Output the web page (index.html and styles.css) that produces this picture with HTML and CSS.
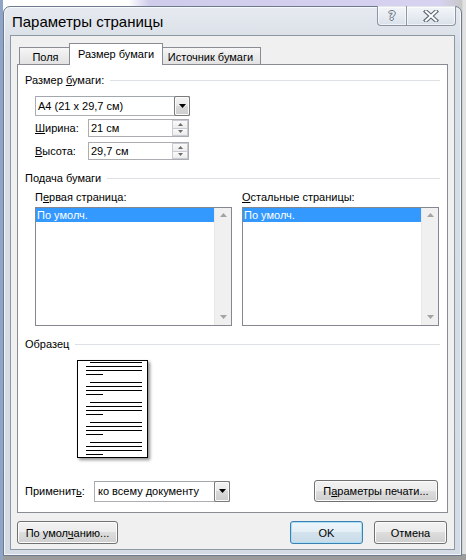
FILE: index.html
```html
<!DOCTYPE html>
<html lang="ru">
<head>
<meta charset="utf-8">
<title>Параметры страницы</title>
<link rel="stylesheet" href="styles.css">
</head>
<body>
<div class="window">
  <div class="titlebar">
    <span class="title">Параметры страницы</span>
    <div class="caption">
      <div class="cap help"><span class="q">?</span></div>
      <div class="cap close">
        <svg width="16" height="12" viewBox="0 0 16 12"><path d="M3 1.5 L13 10.5 M13 1.5 L3 10.5" stroke="#5d6877" stroke-width="4.2" stroke-linecap="square"/><path d="M3 1.5 L13 10.5 M13 1.5 L3 10.5" stroke="#ffffff" stroke-width="2" stroke-linecap="square"/></svg>
      </div>
    </div>
  </div>
  <div class="client">
    <div class="tabs">
      <div class="tab tab-fields">Поля</div>
      <div class="tab tab-size active">Размер бумаги</div>
      <div class="tab tab-source">Источник бумаги</div>
    </div>
    <div class="panel">
      <div class="group-head"><span>Размер <u>б</u>умаги:</span></div>
      <div class="combo combo-size">
        <div class="value">A4 (21 x 29,7 см)</div>
        <div class="drop"><svg width="7" height="4" viewBox="0 0 7 4"><polygon points="0,0 7,0 3.5,4" fill="#000"/></svg></div>
      </div>
      <div class="field-row first">
        <span class="field-label"><u>Ш</u>ирина:</span>
        <div class="spin">
          <div class="value">21 см</div>
          <div class="spin-btns">
            <div class="sb"><svg width="5" height="3" viewBox="0 0 5 3"><polygon points="2.5,0 5,3 0,3" fill="#6b6b6b"/></svg></div>
            <div class="sb"><svg width="5" height="3" viewBox="0 0 5 3"><polygon points="0,0 5,0 2.5,3" fill="#6b6b6b"/></svg></div>
          </div>
        </div>
      </div>
      <div class="field-row">
        <span class="field-label"><u>В</u>ысота:</span>
        <div class="spin">
          <div class="value">29,7 см</div>
          <div class="spin-btns">
            <div class="sb"><svg width="5" height="3" viewBox="0 0 5 3"><polygon points="2.5,0 5,3 0,3" fill="#6b6b6b"/></svg></div>
            <div class="sb"><svg width="5" height="3" viewBox="0 0 5 3"><polygon points="0,0 5,0 2.5,3" fill="#6b6b6b"/></svg></div>
          </div>
        </div>
      </div>

      <div class="group-head gap"><span>Подача бумаги</span></div>
      <div class="feed">
        <div class="feed-col">
          <div class="feed-label"><span>П<u>е</u>рвая страница:</span></div>
          <div class="listbox">
            <div class="items"><div class="item selected">По умолч.</div></div>
            <div class="vscroll">
              <svg width="7" height="4" viewBox="0 0 7 4"><polygon points="3.5,0 7,4 0,4" fill="#a3a3a3"/></svg>
              <svg width="7" height="4" viewBox="0 0 7 4"><polygon points="0,0 7,0 3.5,4" fill="#a3a3a3"/></svg>
            </div>
          </div>
        </div>
        <div class="feed-col">
          <div class="feed-label"><span><u>О</u>стальные страницы:</span></div>
          <div class="listbox">
            <div class="items"><div class="item selected">По умолч.</div></div>
            <div class="vscroll">
              <svg width="7" height="4" viewBox="0 0 7 4"><polygon points="3.5,0 7,4 0,4" fill="#a3a3a3"/></svg>
              <svg width="7" height="4" viewBox="0 0 7 4"><polygon points="0,0 7,0 3.5,4" fill="#a3a3a3"/></svg>
            </div>
          </div>
        </div>
      </div>

      <div class="group-head gap"><span>Образец</span></div>
      <div class="sample">
        <div class="para"><i class="l ind"></i><i class="l"></i><i class="l"></i><i class="l short"></i></div>
        <div class="para"><i class="l ind"></i><i class="l"></i><i class="l"></i><i class="l short"></i></div>
        <div class="para"><i class="l ind"></i><i class="l"></i><i class="l"></i><i class="l short"></i></div>
        <div class="para"><i class="l ind"></i><i class="l"></i><i class="l"></i><i class="l short"></i></div>
        <div class="para"><i class="l ind"></i><i class="l"></i><i class="l"></i><i class="l short"></i></div>
      </div>

      <div class="apply-row">
        <span class="apply-label">Применит<u>ь</u>:</span>
        <div class="combo combo-apply">
          <div class="value">ко всему документу</div>
          <div class="drop"><svg width="7" height="4" viewBox="0 0 7 4"><polygon points="0,0 7,0 3.5,4" fill="#000"/></svg></div>
        </div>
        <div class="btn btn-print"><span>П<u>а</u>раметры печати...</span></div>
      </div>
    </div>
    <div class="buttons">
      <div class="btn btn-default-set"><span>По умол<u>ч</u>анию...</span></div>
      <div class="btn btn-ok default">OK</div>
      <div class="btn btn-cancel">Отмена</div>
    </div>
  </div>
</div>
</body>
</html>
```
FILE: styles.css
```css
* { box-sizing: border-box; }
html, body { margin: 0; padding: 0; }
body {
  width: 466px;
  height: 560px;
  overflow: hidden;
  position: relative;
  font-family: "Liberation Sans", Arial, sans-serif;
  font-size: 11px;
  color: #000;
  background:
    linear-gradient(to right, #8fa5c8 0, #8fa5c8 3px, transparent 3px),
    linear-gradient(to bottom, transparent 0, transparent 554px, #9c9c9c 554px),
    linear-gradient(to right, #ffffff 0, #ffffff 128px, #cfcbea 150px, #d6d2f0 440px, #c8c8c8 462px, #e2e2e2 463px);
}
u { text-decoration: underline; text-underline-offset: 1px; }

.window {
  position: absolute;
  left: 3px;
  top: 6px;
  width: 459px;
  height: 550px;
  border: 1px solid #6b7a8c;
  border-radius: 7px 7px 0 0;
  background: linear-gradient(#e6eaf0, #d8dee6 40px, #d4dbe4);
  box-shadow: inset 0 0 0 1px rgba(255,255,255,0.7);
  display: flex;
  flex-direction: column;
}
.titlebar {
  height: 28px;
  position: relative;
  display: flex;
  align-items: center;
  padding-left: 8px;
  padding-top: 1px;
  font-size: 15px;
  color: #000;
}
.caption {
  position: absolute;
  top: -1px;
  right: 5px;
  display: flex;
  height: 20px;
}
.cap {
  height: 20px;
  border: 1px solid #8c96a3;
  border-top: none;
  background: linear-gradient(rgba(255,255,255,0.55), rgba(236,240,245,0.6) 50%, rgba(214,222,232,0.6));
  box-shadow: inset 0 0 0 1px rgba(255,255,255,0.6);
  display: flex;
  align-items: center;
  justify-content: center;
}
.cap.help { width: 29px; border-radius: 0 0 0 4px; border-right: none; }
.cap.close { width: 50px; border-radius: 0 0 4px 0; }
.q {
  font-family: "DejaVu Sans", sans-serif;
  font-weight: bold;
  font-size: 12px;
  color: #e9ecf0;
  text-shadow: 1px 0 0 #6d7684, -1px 0 0 #6d7684, 0 1px 0 #6d7684, 0 -1px 0 #6d7684;
}

.client {
  flex: 1;
  margin: 0 6px 5px 6px;
  background: #f0f0f0;
  border: 1px solid #8d98a5;
}
.tabs {
  display: flex;
  align-items: flex-end;
  height: 21px;
  margin-top: 7px;
  padding-left: 8px;
}
.tab {
  height: 17px;
  border: 1px solid #898c95;
  border-bottom: none;
  background: linear-gradient(#f6f6f6, #ebebeb 50%, #e2e2e2);
  display: flex;
  align-items: center;
  justify-content: center;
  padding-top: 1px;
}
.tab-fields { width: 52px; border-right: none; }
.tab-size { width: 94px; }
.tab-source { width: 100px; border-left: none; }
.tab.active {
  height: 22px;
  margin: 0 -2px -1px -2px;
  border-left: 1px solid #898c95;
  border-right: 1px solid #898c95;
  background: #ffffff;
  position: relative;
  z-index: 1;
  padding-top: 0;
  padding-bottom: 2px;
}

.panel {
  margin-left: 6px;
  width: 431px;
  height: 449px;
  border: 1px solid #898c95;
  background: #ffffff;
  padding: 8px 7px 0 7px;
}
.group-head {
  display: flex;
  align-items: center;
  height: 14px;
  white-space: nowrap;
}
.group-head::after {
  content: "";
  flex: 1;
  height: 1px;
  background: #dde1e6;
  margin-left: 6px;
}
.group-head.gap { margin-top: 11px; }

.combo {
  display: flex;
  background: #fff;
  border: 1px solid #abadb3;
  border-top-color: #a3a7ae;
}
.combo .value, .spin .value {
  flex: 1;
  display: flex;
  align-items: center;
  padding-left: 2px;
  white-space: nowrap;
}
.combo-size {
  width: 155px;
  height: 20px;
  margin: 9px 0 0 10px;
}
.drop {
  width: 16px;
  border: 1px solid #7a7a7a;
  border-radius: 2px;
  background: linear-gradient(#f4f4f4, #e9e9e9 50%, #d9d9d9 50%, #cdcdcd);
  box-shadow: inset 0 0 0 1px #fbfbfb;
  display: flex;
  align-items: center;
  justify-content: center;
  margin: -1px -1px -1px 0;
}

.field-row {
  display: flex;
  align-items: center;
  height: 18px;
  margin: 5px 0 0 10px;
}
.field-row.first { margin-top: 3px; }
.field-label { width: 53px; }
.spin {
  width: 101px;
  height: 18px;
  display: flex;
  border: 1px solid #abadb3;
  background: #fff;
}
.spin-btns {
  width: 16px;
  display: flex;
  flex-direction: column;
}
.sb {
  flex: 1;
  border: 1px solid #c8ccd2;
  background: linear-gradient(#fafafa, #ececec);
  display: flex;
  align-items: center;
  justify-content: center;
}
.sb + .sb { border-top: none; }

.feed {
  display: flex;
  gap: 10px;
  margin: 5px 0 0 10px;
}
.feed-col { width: 197px; }
.feed-label { height: 14px; display: flex; align-items: center; }
.listbox {
  margin-top: 3px;
  height: 119px;
  border: 1px solid #828790;
  background: #fff;
  display: flex;
}
.items { flex: 1; }
.item {
  height: 14px;
  line-height: 14px;
  padding-left: 1px;
}
.item.selected { background: #3399ff; color: #fff; }
.vscroll {
  width: 17px;
  background: #f0f0f0;
  border-left: 1px solid #e8e8e8;
  display: flex;
  flex-direction: column;
  justify-content: space-between;
  align-items: center;
  padding: 5px 0 6px 0;
}

.sample {
  margin: 9px 0 0 52px;
  width: 71px;
  height: 98px;
  border: 1px solid #000;
  background: #fff;
  box-shadow: 2px 2px 3px rgba(0,0,0,0.45);
  padding: 1px 0 0 8px;
}
.para {
  display: flex;
  flex-direction: column;
  gap: 3px;
  margin-bottom: 7px;
}
.l { display: block; height: 1px; width: 56px; background: #000; }
.l.ind { width: 52px; margin-left: 4px; }
.l.short { width: 17px; }

.apply-row {
  display: flex;
  align-items: center;
  height: 22px;
  margin-top: 22px;
}
.apply-label { width: 69px; }
.combo-apply { width: 136px; height: 21px; }
.combo-apply .value { padding-left: 3px; }

.btn {
  height: 22px;
  border: 1px solid #707070;
  border-radius: 3px;
  background: linear-gradient(#f2f2f2, #ebebeb 50%, #dddddd 50%, #cfcfcf);
  box-shadow: inset 0 0 0 1px #fcfcfc;
  display: flex;
  align-items: center;
  justify-content: center;
  white-space: nowrap;
}
.btn-print { width: 124px; margin-left: auto; margin-right: 2px; }
.buttons {
  display: flex;
  margin-top: 8px;
  padding: 0 7px 0 6px;
}
.buttons .btn { height: 23px; }
.btn-default-set { width: 101px; }
.btn-ok { width: 73px; margin-left: auto; }
.btn-cancel { width: 73px; margin-left: 11px; }
.btn.default {
  border-color: #3c7fb1;
  background: linear-gradient(#eef6fb, #e3eef5 50%, #d3e3ee 50%, #c9dbe8);
  box-shadow: inset 0 0 0 1px #a9def5;
}
```
